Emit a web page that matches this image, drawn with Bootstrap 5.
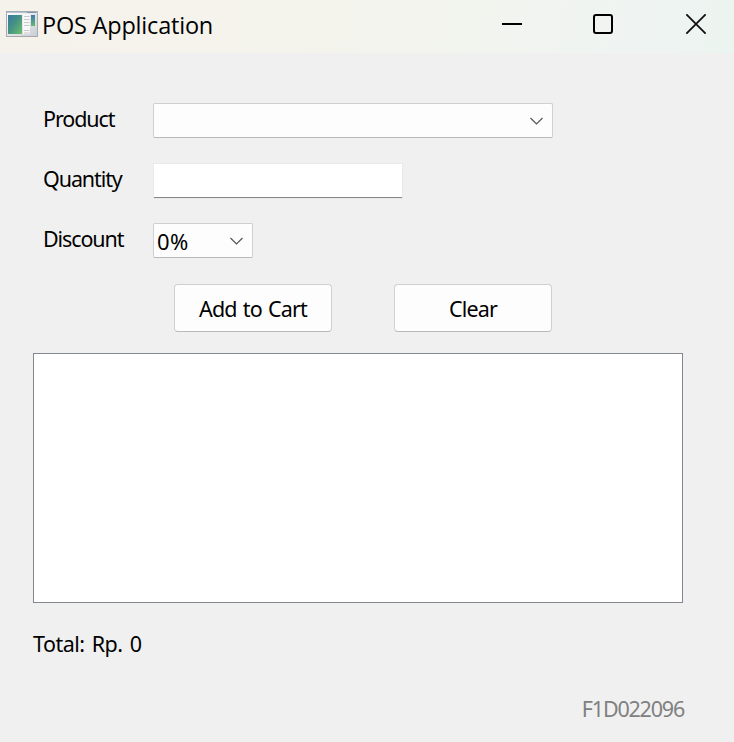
<!DOCTYPE html>
<html lang="en">
<head>
<meta charset="utf-8">
<title>POS Application</title>
<meta name="viewport" content="width=device-width, initial-scale=1">
<link href="https://cdn.jsdelivr.net/npm/bootstrap@5.3.0/dist/css/bootstrap.min.css" rel="stylesheet">
<style>
body{font-family:"Noto Sans","Open Sans",sans-serif;font-size:21.5px;line-height:30px;color:#000;background:#f0f0f0}
.app-window{width:734px;height:742px;overflow:hidden}
.title-bar{height:53px;background:linear-gradient(100deg,#f5f2eb 0%,#f4f3ec 35%,#f2f4ee 65%,#eff4f2 85%,#ecf4f0 100%)}
.app-title{font-family:"Open Sans","Noto Sans",sans-serif;font-size:23.5px;letter-spacing:-.2px;padding-left:4px;padding-bottom:4px}
.app-icon{margin:-6px 0 0 6px}
.win-btn{border:0;background:none;padding:0 0 5px;height:53px}
.win-min{width:72px}
.win-max{width:110px}
.win-close{width:76px}
.form-area{padding:50px 0 0 43px}
.field-row{height:35px;margin-bottom:25px}
.field-label{width:110px;margin-top:-3px;letter-spacing:-1.1px}
.combo{height:35px;border:1px solid #d0d0d0;border-bottom-color:#b9b9b9;border-radius:2px;background:#fdfdfd;padding:0 9px 0 3px}
.combo-wide{width:400px}
.combo-small{width:100px}
.combo-value{font-size:22px;letter-spacing:.3px}
.qty-box{width:248px;height:34px;margin:1px 0 0 1px;border:0;border-bottom:1px solid #868686;border-radius:0;background:#fff;padding:0 4px;box-shadow:0 0 0 1px #eaeaea;outline:0}
.push{width:158px;height:48px;border:1px solid #d0d0d0;border-bottom-color:#bababa;border-radius:4px;background:#fdfdfd;padding:1px 0 0;color:#000;font-size:21.5px;line-height:30px;letter-spacing:-.8px;word-spacing:1.2px}
.push-row{gap:62px;margin:26px 0 21px 131px}
.cart-list{width:650px;height:250px;margin-left:33px;border:1px solid #828790;background:#fff}
.total-line{padding:26px 0 0 33px;letter-spacing:-.5px;word-spacing:2px}
.student-id{color:#808080;padding:35px 50px 0 0;letter-spacing:-1.2px}
</style>
<script src="https://cdn.jsdelivr.net/npm/bootstrap@5.3.0/dist/js/bootstrap.bundle.min.js"></script>
</head>
<body>
<div class="app-window d-flex flex-column">
  <header class="title-bar d-flex align-items-center flex-shrink-0">
    <svg class="app-icon flex-shrink-0" width="32" height="26" viewBox="0 0 32 26">
      <defs>
        <linearGradient id="pane" x1="0" y1="0" x2="1" y2="1"><stop offset="0" stop-color="#3978a5"/><stop offset=".45" stop-color="#459184"/><stop offset="1" stop-color="#6cc06b"/></linearGradient>
        <linearGradient id="frame" x1="0" y1="0" x2="1" y2="1"><stop offset="0" stop-color="#fff"/><stop offset="1" stop-color="#c9cdd4"/></linearGradient>
        <linearGradient id="side" x1="0" y1="0" x2="0" y2="1"><stop offset="0" stop-color="#3f79b0"/><stop offset="1" stop-color="#65b86f"/></linearGradient>
      </defs>
      <rect x=".5" y=".5" width="31" height="25" fill="url(#frame)" stroke="#a6abb2"/>
      <path d="M1 1.500H31" stroke="#b9c5d3"/>
      <path d="M21 1.500H30" stroke="#8795a8"/>
      <rect x="2" y="4" width="14" height="19" fill="url(#pane)"/>
      <rect x="17" y="3" width="7" height="20" fill="#f8f8f8"/>
      <path d="M18 5.500h5.500M18 8.500h5.500M18 11.500h5.500M18 14.500h5.500M18 19.500h5.500M18 22h5.500" stroke="#c9c9cb"/>
      <rect x="25" y="4" width="4" height="11" fill="url(#side)"/>
      <path d="M0 25.500H32" stroke="#a6a8ab"/>
    </svg>
    <span class="app-title">POS Application</span>
    <div class="d-flex ms-auto">
      <button class="win-btn win-min d-flex align-items-center justify-content-center" aria-label="Minimize"><svg width="20" height="20"><path d="M0 10H20" stroke="#000" stroke-width="2"/></svg></button>
      <button class="win-btn win-max d-flex align-items-center justify-content-center" aria-label="Maximize"><svg width="20" height="20"><rect x="1" y="1" width="18" height="18" rx="2" fill="none" stroke="#000" stroke-width="2"/></svg></button>
      <button class="win-btn win-close d-flex align-items-center justify-content-center" aria-label="Close"><svg width="20" height="20"><path d="M.3.3 19.700 19.700M19.700.3.3 19.700" stroke="#111" stroke-width="1.800"/></svg></button>
    </div>
  </header>
  <main>
    <div class="form-area">
      <div class="field-row d-flex align-items-center">
        <span class="field-label">Product</span>
        <div class="combo combo-wide d-flex align-items-center justify-content-end" role="combobox" aria-label="Product">
          <svg width="13" height="8" viewBox="0 0 13 8"><path d="M.5 1 6.500 7 12.500 1" fill="none" stroke="#555" stroke-width="1.200"/></svg>
        </div>
      </div>
      <div class="field-row d-flex align-items-center">
        <span class="field-label">Quantity</span>
        <input class="qty-box" type="text" aria-label="Quantity">
      </div>
      <div class="field-row d-flex align-items-center mb-0">
        <span class="field-label">Discount</span>
        <div class="combo combo-small d-flex align-items-center justify-content-between" role="combobox" aria-label="Discount">
          <span class="combo-value">0%</span>
          <svg width="13" height="8" viewBox="0 0 13 8"><path d="M.5 1 6.500 7 12.500 1" fill="none" stroke="#555" stroke-width="1.200"/></svg>
        </div>
      </div>
      <div class="push-row d-flex">
        <button class="btn push" type="button">Add to Cart</button>
        <button class="btn push" type="button">Clear</button>
      </div>
    </div>
    <div class="cart-list"></div>
    <div class="total-line">Total: Rp. 0</div>
    <div class="student-id text-end">F1D022096</div>
  </main>
</div>
</body>
</html>
